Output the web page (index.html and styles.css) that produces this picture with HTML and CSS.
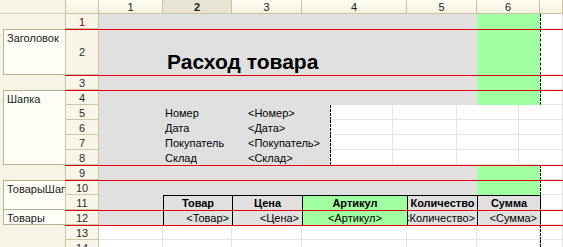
FILE: index.html
```html
<!DOCTYPE html>
<html lang="ru">
<head>
  <meta charset="UTF-8" />
  <title>Расход товара — макет</title>
  <link rel="stylesheet" href="styles.css">
</head>
<body>
  <div class="sheet">
    <div class="groups">
      <div class="top"></div>
      <div class="gap"></div>
      <div class="group h46">Заголовок</div>
      <div class="gap"></div>
      <div class="group h75">Шапка</div>
      <div class="gap"></div>
      <div class="group h30">ТоварыШапка</div>
      <div class="group h15">Товары</div>
    </div>

    <div class="grid">
      <div class="row head">
        <div class="corner"></div>
        <div class="ch">1</div>
        <div class="ch sel">2</div>
        <div class="ch">3</div>
        <div class="ch">4</div>
        <div class="ch">5</div>
        <div class="ch">6</div>
        <div class="ch"></div>
      </div>

      <div class="row">
        <div class="num cur">1</div>
        <div class="c g"></div><div class="c g"></div><div class="c g"></div><div class="c g"></div><div class="c g"></div>
        <div class="c gr"></div>
        <div class="c w pl"></div>
      </div>

      <div class="row tall mark">
        <div class="num">2</div>
        <div class="c g"></div>
        <div class="c g title"><span>Расход товара</span></div>
        <div class="c g"></div><div class="c g"></div><div class="c g"></div>
        <div class="c gr"></div>
        <div class="c w pl"></div>
      </div>

      <div class="row mark">
        <div class="num">3</div>
        <div class="c g"></div><div class="c g"></div><div class="c g"></div><div class="c g"></div><div class="c g"></div>
        <div class="c gr"></div>
        <div class="c w pl"></div>
      </div>

      <div class="row mark">
        <div class="num">4</div>
        <div class="c g"></div><div class="c g"></div><div class="c g"></div><div class="c g"></div><div class="c g"></div>
        <div class="c gr"></div>
        <div class="c w pl"></div>
      </div>

      <div class="row alt">
        <div class="num">5</div>
        <div class="c g"></div>
        <div class="c g">Номер</div>
        <div class="c g">&lt;Номер&gt;</div>
        <div class="c w pl"></div><div class="c w"></div><div class="c w"></div><div class="c w"></div>
      </div>
      <div class="row alt">
        <div class="num">6</div>
        <div class="c g"></div>
        <div class="c g">Дата</div>
        <div class="c g">&lt;Дата&gt;</div>
        <div class="c w pl"></div><div class="c w"></div><div class="c w"></div><div class="c w"></div>
      </div>
      <div class="row alt">
        <div class="num">7</div>
        <div class="c g"></div>
        <div class="c g">Покупатель</div>
        <div class="c g">&lt;Покупатель&gt;</div>
        <div class="c w pl"></div><div class="c w"></div><div class="c w"></div><div class="c w"></div>
      </div>
      <div class="row alt">
        <div class="num">8</div>
        <div class="c g"></div>
        <div class="c g">Склад</div>
        <div class="c g">&lt;Склад&gt;</div>
        <div class="c w pl"></div><div class="c w"></div><div class="c w"></div><div class="c w"></div>
      </div>

      <div class="row mark">
        <div class="num">9</div>
        <div class="c g"></div><div class="c g"></div><div class="c g"></div><div class="c g"></div><div class="c g"></div>
        <div class="c gr"></div>
        <div class="c w pl"></div>
      </div>

      <div class="row mark">
        <div class="num">10</div>
        <div class="c g"></div><div class="c g"></div><div class="c g"></div><div class="c g"></div><div class="c g"></div>
        <div class="c gr"></div>
        <div class="c w pl"></div>
      </div>

      <div class="row">
        <div class="num">11</div>
        <div class="c g"></div>
        <div class="c g t th">Товар</div>
        <div class="c g t th">Цена</div>
        <div class="c gr t th">Артикул</div>
        <div class="c g t th">Количество</div>
        <div class="c g t th">Сумма</div>
        <div class="c w t"></div>
      </div>

      <div class="row mark">
        <div class="num">12</div>
        <div class="c g"></div>
        <div class="c g t td r"><span>&lt;Товар&gt;</span></div>
        <div class="c g t td r"><span>&lt;Цена&gt;</span></div>
        <div class="c gr t td ctr"><span>&lt;Артикул&gt;</span></div>
        <div class="c g t td r clip"><span>&lt;Количество&gt;</span></div>
        <div class="c g t td r"><span>&lt;Сумма&gt;</span></div>
        <div class="c w t"></div>
      </div>

      <div class="row mark">
        <div class="num">13</div>
        <div class="c w"></div><div class="c w"></div><div class="c w"></div><div class="c w"></div><div class="c w"></div><div class="c w"></div>
        <div class="c w pl"></div>
      </div>

      <div class="row">
        <div class="num">14</div>
        <div class="c w"></div><div class="c w"></div><div class="c w"></div><div class="c w"></div><div class="c w"></div><div class="c w"></div>
        <div class="c w pl"></div>
      </div>
    </div>
  </div>
</body>
</html>
```

FILE: styles.css
```css
* {
  box-sizing: border-box;
  margin: 0;
  padding: 0;
}

body {
  font: 11px "Liberation Sans", Arial, sans-serif;
  color: #000;
  background: #fff;
  overflow: hidden;
}

.sheet {
  display: flex;
  width: 563px;
  height: 247px;
  overflow: hidden;
}

/* left column with the named areas */
.groups {
  width: 65px;
  flex: none;
  display: flex;
  flex-direction: column;
  background: #f6f4e5;
}

.groups .top {
  height: 14px;
  border-bottom: 1px solid #d8d3b8;
}

.gap {
  height: 15px;
}

.group {
  margin-left: 3px;
  padding: 2px 0 0 3px;
  background: #fffef6;
  border: 1px solid #b5b198;
  border-right: none;
  color: #1a1a1a;
  white-space: nowrap;
  overflow: hidden;
}

.group + .group {
  border-top: none;
}

.h46 { height: 46px; }
.h75 { height: 75px; }
.h30 { height: 30px; }
.h15 { height: 15px; }

/* sheet */
.grid {
  flex: 1;
  display: flex;
  flex-direction: column;
}

.row {
  position: relative;
  display: grid;
  grid-template-columns: 34px 64px 69px 70px 105px 70px 63px 1fr;
  height: 15px;
  flex: none;
}

.row.tall {
  height: 46px;
}

.row.alt {
  grid-template-columns: 34px 64px 83px 84px 63px 64px 62px 1fr;
}

.row.head {
  height: 14px;
}

/* area boundaries */
.row.mark::after {
  content: "";
  position: absolute;
  left: 0;
  right: 0;
  top: 0;
  height: 1px;
  background: #e4000a;
  z-index: 3;
}

.corner,
.ch {
  background: linear-gradient(#fefdf4, #f3f0dd);
  border-right: 1px solid #c9c3a4;
  border-bottom: 1px solid #c9c3a4;
}

.corner {
  border-left: 1px solid #c9c3a4;
}

.ch {
  padding-top: 2px;
  line-height: 11px;
  text-align: center;
  color: #222;
}

.ch.sel {
  background: #e7e4d3;
  font-weight: bold;
}

.num {
  padding-top: 2px;
  background: #f8f6e9;
  border-left: 1px solid #cbc6ab;
  border-right: 1px solid #cbc6ab;
  border-bottom: 1px solid #cbc6ab;
  line-height: 12px;
  text-align: center;
  color: #2b2b2b;
}

.tall .num {
  display: flex;
  align-items: center;
  justify-content: center;
  padding-top: 0;
}

.num.cur {
  color: #8b0000;
}

.c {
  display: flex;
  align-items: center;
  min-width: 0;
  padding: 0 2px;
  white-space: nowrap;
}

.c span {
  position: relative;
  z-index: 1;
}

.g { background: #e0e0e0; }
.gr { background: #a0ffa0; }

.w {
  border-right: 1px solid #e4e4e4;
  border-bottom: 1px solid #e4e4e4;
}

.pl {
  border-left: 1px dashed #000;
}

.alt .g + .g + .g {
  padding-left: 2px;
}

.title {
  align-items: flex-end;
  padding: 0 0 1px 4px;
  font-size: 21px;
  font-weight: bold;
}

/* table block */
.t {
  border-left: 1px solid #000;
  border-top: 1px solid #000;
}

.w.t {
  border-top: none;
}

.th {
  justify-content: center;
  font-weight: bold;
}

.r {
  justify-content: flex-end;
  padding-right: 3px;
}

.ctr {
  justify-content: center;
}

.clip {
  overflow: hidden;
  padding-right: 2px;
}
```
